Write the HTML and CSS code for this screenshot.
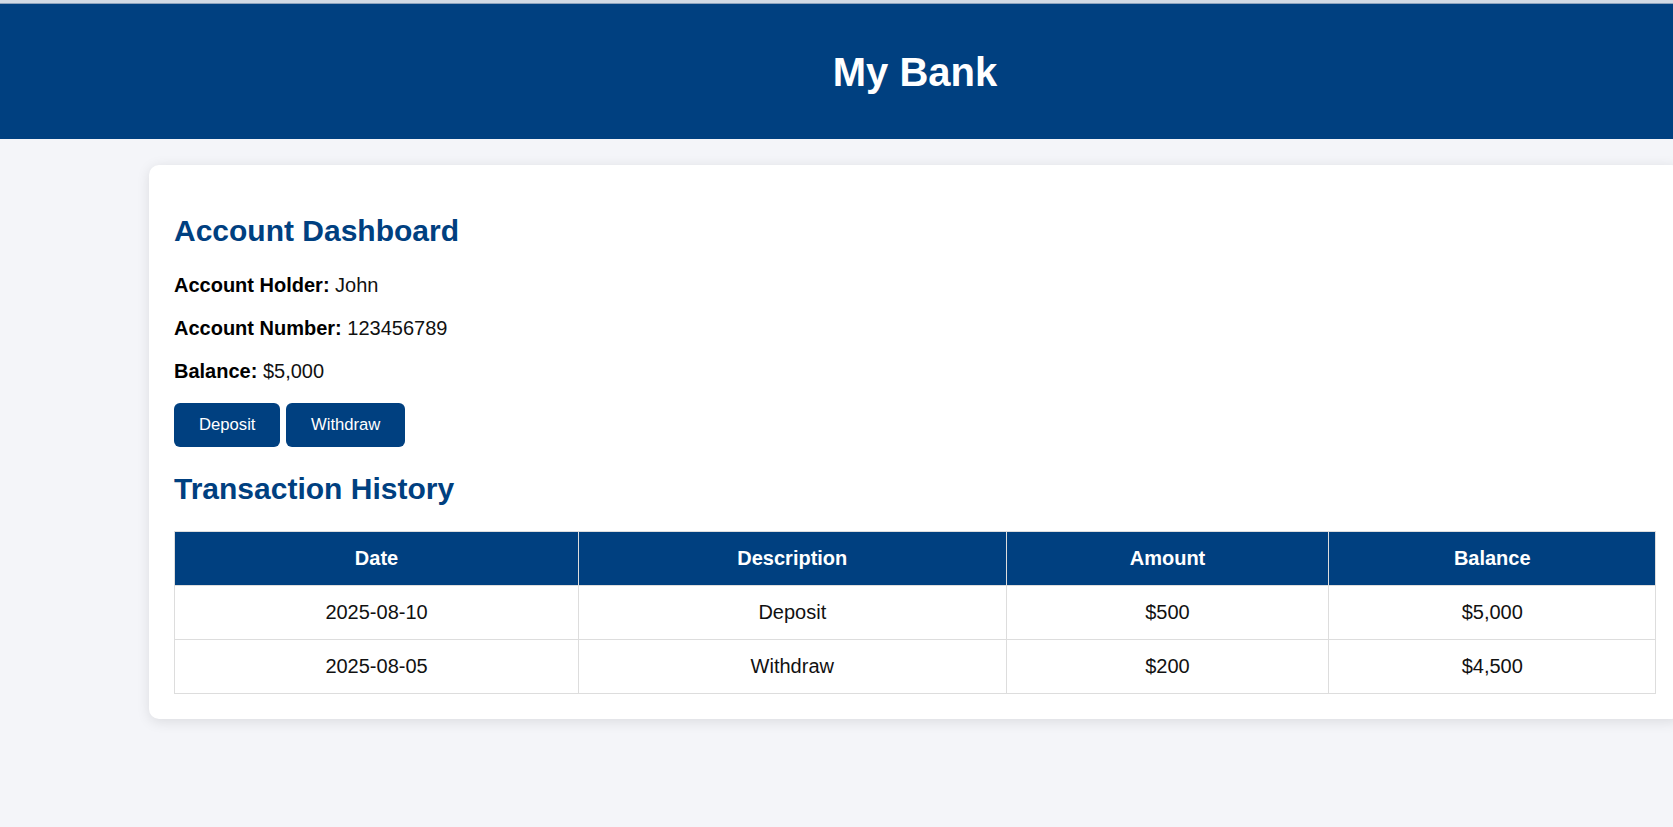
FILE: index.html
```html
<!DOCTYPE html>
<html lang="en">
<head>
<meta charset="utf-8">
<title>My Bank</title>
<link rel="stylesheet" href="styles.css">
</head>
<body>
<div class="page">
  <div class="topline"></div>
  <header class="site-header">
    <h1 class="site-title">My Bank</h1>
  </header>
  <main class="main">
    <section class="card">
      <h2 class="section-title">Account Dashboard</h2>
      <p class="info"><strong>Account Holder:</strong> John</p>
      <p class="info"><strong>Account Number:</strong> 123456789</p>
      <p class="info"><strong>Balance:</strong> $5,000</p>
      <div class="actions">
        <button class="btn" type="button">Deposit</button>
        <button class="btn" type="button">Withdraw</button>
      </div>
      <h2 class="section-title">Transaction History</h2>
      <table class="tx-table">
        <thead>
          <tr><th>Date</th><th>Description</th><th>Amount</th><th>Balance</th></tr>
        </thead>
        <tbody>
          <tr><td>2025-08-10</td><td>Deposit</td><td>$500</td><td>$5,000</td></tr>
          <tr><td>2025-08-05</td><td>Withdraw</td><td>$200</td><td>$4,500</td></tr>
        </tbody>
      </table>
    </section>
  </main>
</div>
</body>
</html>
```

FILE: styles.css
```css
html, body {
  margin: 0;
  padding: 0;
  overflow: hidden;
}
body {
  background: #f4f5f9;
  font-family: "Liberation Sans", Arial, sans-serif;
  font-size: 20px;
  color: #111;
  height: 827px;
}
.page {
  width: 1830px;
}
.topline {
  height: 3px;
  background: #d2dae4;
  border-bottom: 1px solid #8ea3bd;
}
.site-header {
  background: #004080;
  color: #fff;
  padding: 45px 0 44px;
  text-align: center;
}
.site-title {
  margin: 0;
  font-size: 40px;
  line-height: 46px;
  font-weight: bold;
}
.main {
  padding: 26px 0 0;
}
.card {
  width: 1482px;
  margin: 0 auto;
  padding: 24px 25px 25px;
  background: #fff;
  border-radius: 10px;
  box-shadow: 0 2.5px 12.5px rgba(0, 0, 0, 0.1);
}
.section-title {
  color: #004080;
  font-size: 30px;
  line-height: 34.5px;
  margin: 25px 0;
  font-weight: bold;
}
.info {
  margin: 20px 0;
  line-height: 23px;
}
.info strong {
  color: #000;
}
.actions {
  display: flex;
  gap: 5.5px;
}
.btn {
  font-family: "Liberation Sans", Arial, sans-serif;
  font-size: 16.67px;
  line-height: 19px;
  background: #004080;
  color: #fff;
  border: none;
  border-radius: 6px;
  padding: 12.5px 25px;
  cursor: pointer;
}
.tx-table {
  width: 100%;
  border-collapse: collapse;
  font-size: 20px;
  line-height: 23px;
}
.tx-table th,
.tx-table td {
  border: 1px solid #dddddd;
  padding: 15px;
  text-align: center;
}
.tx-table th {
  background: #004080;
  color: #fff;
  font-weight: bold;
}
```
